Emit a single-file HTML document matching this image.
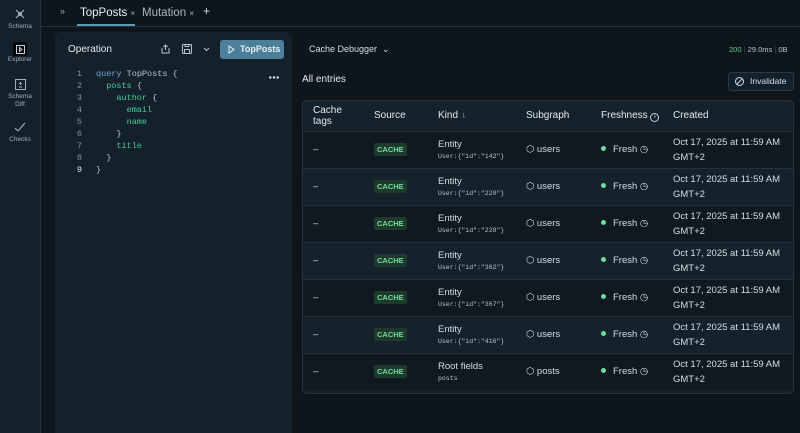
<!DOCTYPE html><html><head><style>
*{box-sizing:border-box;margin:0;padding:0}
body{width:800px;height:433px;overflow:hidden;background:#0e161c;font-family:"Liberation Sans",sans-serif;color:#d5dde3;position:relative}
.abs{position:absolute}
.side{left:0;top:0;width:41px;height:433px;background:#15212a;border-right:1px solid #24323c}
.si{position:absolute;left:0;width:40px;text-align:center;font-size:6.5px;color:#9fb0bc;line-height:8px}
.tabs{left:41px;top:0;right:0;height:27px;border-bottom:1px solid #24323c}
.panel{left:55px;top:32px;width:237px;height:401px;background:#15212a;border-radius:6px 6px 0 0}
.mono{font-family:"Liberation Mono",monospace}
.code{font-size:8.5px;line-height:12px}
.ln{position:absolute;left:15px;width:12px;text-align:right;color:#8494a0}
table{border-collapse:collapse;width:100%;font-size:9.5px}
.tbl{left:302px;top:100px;width:492px;height:294px;border:1px solid #24323c;border-radius:5px;overflow:hidden;background:#15222b}
td,th{padding:0 0 0 10px;text-align:left;vertical-align:middle}
th{height:30px;font-weight:normal;color:#e3e9ee;font-size:10px}
tr.r td{height:37px;border-top:1px solid #24323c}
tr.o{background:#10191f}
tr.e{background:#15222b}
.badge{background:#1d3a2c;color:#6fdc9a;font-size:7.5px;font-weight:bold;padding:2px 3px;border-radius:2px}
.sub{font-family:"Liberation Mono",monospace;font-size:6.5px;color:#b9c4cc;display:block;margin-top:3px}
.dot{display:inline-block;width:5px;height:5px;border-radius:50%;background:#6fdc9a;margin-right:7px;vertical-align:1px}
</style></head><body>
<div class="abs side">
<div class="si" style="top:8px"><svg width="12" height="12" viewBox="0 0 12 12" fill="none" stroke="#9fb0bc" stroke-width="1.2"><path d="M2 2l8 8M10 2l-8 8"/><circle cx="6" cy="6" r="1.5"/></svg><br>Schema</div>
<div class="si" style="top:42px"><div style="margin:0 auto;width:14px;height:14px;background:#05090c;border-radius:2px;display:flex;align-items:center;justify-content:center"><svg width="9" height="9" viewBox="0 0 9 9" fill="none" stroke="#c5d0d8"><rect x=".5" y=".5" width="8" height="8"/><path d="M3.5 2.5l2.5 2-2.5 2z"/></svg></div>Explorer</div>
<div class="si" style="top:79px"><svg width="11" height="11" viewBox="0 0 11 11" fill="none" stroke="#9fb0bc"><rect x=".5" y=".5" width="10" height="10"/><path d="M5.5 3v3M4 4.5h3M4 8h3"/></svg><br>Schema<br>Diff</div>
<div class="si" style="top:122px"><svg width="12" height="11" viewBox="0 0 12 11" fill="none" stroke="#9fb0bc" stroke-width="1.1"><path d="M1 6l3 3 7-8"/></svg><br>Checks</div>
</div>
<div class="abs tabs">
<span class="abs" style="left:19px;top:6px;font-size:9px;color:#9fb0bc">»</span>
<span class="abs" style="left:39px;top:7px;font-size:11.5px;color:#e8eef2">TopPosts <span style="font-size:8px;color:#9fb0bc">×</span></span>
<div class="abs" style="left:36px;top:24px;width:58px;height:2px;background:#5b9ab8"></div>
<span class="abs" style="left:101px;top:7px;font-size:11.5px;color:#a9b6c0">Mutation <span style="font-size:8px">×</span></span>
<span class="abs" style="left:162px;top:4px;font-size:12px;color:#d5dde3">+</span>
</div>
<div class="abs panel">
<span class="abs" style="left:13px;top:12px;font-size:10px;color:#e3e9ee">Operation</span>
<svg class="abs" style="left:106px;top:12px" width="9" height="10" viewBox="0 0 9 10" fill="none" stroke="#b8c4cc"><path d="M1 4v5h7V4M4.5 6V1M2.5 3l2-2 2 2"/></svg>
<svg class="abs" style="left:127px;top:12px" width="10" height="10" viewBox="0 0 10 10" fill="none" stroke="#b8c4cc"><rect x=".5" y=".5" width="9" height="9" rx="1"/><rect x="2.5" y="5.5" width="5" height="4"/><path d="M3 .5v2h4v-2"/></svg>
<svg class="abs" style="left:148px;top:15px" width="7" height="5" viewBox="0 0 7 5" fill="none" stroke="#b8c4cc"><path d="M1 1l2.5 2.5L6 1"/></svg>
<div class="abs" style="left:165px;top:8px;width:64px;height:19px;background:#4c7f99;border-radius:3px;font-size:9px;font-weight:bold;color:#e8f1f6;line-height:19px;padding-left:20px;white-space:nowrap">TopPosts</div>
<svg class="abs" style="left:173px;top:13px" width="7" height="9" viewBox="0 0 7 9" fill="none" stroke="#e8f1f6"><path d="M1 1l5 3.5L1 8z"/></svg>
<svg class="abs" style="left:214px;top:44px" width="10" height="3" viewBox="0 0 10 3" fill="#e3e9ee"><circle cx="1.3" cy="1.5" r="1.2"/><circle cx="5" cy="1.5" r="1.2"/><circle cx="8.7" cy="1.5" r="1.2"/></svg>
<div class="code mono abs" style="left:0;top:36px;width:237px">
<div class="ln" style="top:0">1</div><div class="ln" style="top:12px">2</div><div class="ln" style="top:24px">3</div><div class="ln" style="top:36px">4</div><div class="ln" style="top:48px">5</div><div class="ln" style="top:60px">6</div><div class="ln" style="top:72px">7</div><div class="ln" style="top:84px">8</div><div class="ln" style="top:96px;color:#e3e9ee">9</div>
<div class="abs" style="left:41px;top:0;white-space:pre;color:#b8c4cc"><span style="color:#6aa5e0">query</span> TopPosts {
  <span style="color:#3ccf9a">posts</span> {
    <span style="color:#3ccf9a">author</span> {
      <span style="color:#3ccf9a">email</span>
      <span style="color:#3ccf9a">name</span>
    }
    <span style="color:#3ccf9a">title</span>
  }
}</div>
</div>
</div>
<span class="abs" style="left:309px;top:44px;font-size:9px;color:#d5dde3">Cache Debugger &nbsp;⌄</span>
<span class="abs" style="left:729px;top:45px;font-size:7.5px;color:#b8c4cc"><span style="color:#5fc98a">200</span> <span style="color:#3a4650">|</span> 29.0ms <span style="color:#3a4650">|</span> 0B</span>
<span class="abs" style="left:302px;top:74px;font-size:10px;color:#e3e9ee">All entries</span>
<div class="abs" style="left:728px;top:72px;width:66px;height:19px;border:1px solid #2a3944;border-radius:3px;background:#13202a;font-size:8.5px;color:#d5dde3;line-height:17px;padding-left:21px">Invalidate</div>
<svg class="abs" style="left:735px;top:77px" width="9" height="9" viewBox="0 0 9 9" fill="none" stroke="#d5dde3"><circle cx="4.5" cy="4.5" r="4"/><path d="M1.8 7.2l5.4-5.4"/></svg>
<div class="abs tbl"><table>
<colgroup><col style="width:61px"><col style="width:64px"><col style="width:88px"><col style="width:75px"><col style="width:72px"><col></colgroup>
<tr><th>Cache<br>tags</th><th>Source</th><th>Kind <span style="font-size:7px;color:#8494a0">⇂</span></th><th>Subgraph</th><th>Freshness <span style="display:inline-block;width:9px;height:9px;border:1px solid #c5d0d8;border-radius:50%;font-size:6px;text-align:center;line-height:7px;vertical-align:0">i</span></th><th>Created</th></tr>
<tr class="r o"><td>–</td><td><span class="badge">CACHE</span></td><td>Entity<span class="sub">User:{"id":"142"}</span></td><td>⬡ users</td><td><span class="dot"></span>Fresh ◷</td><td style="line-height:15px">Oct 17, 2025 at 11:59 AM<br>GMT+2</td></tr>
<tr class="r e"><td>–</td><td><span class="badge">CACHE</span></td><td>Entity<span class="sub">User:{"id":"220"}</span></td><td>⬡ users</td><td><span class="dot"></span>Fresh ◷</td><td style="line-height:15px">Oct 17, 2025 at 11:59 AM<br>GMT+2</td></tr>
<tr class="r o"><td>–</td><td><span class="badge">CACHE</span></td><td>Entity<span class="sub">User:{"id":"228"}</span></td><td>⬡ users</td><td><span class="dot"></span>Fresh ◷</td><td style="line-height:15px">Oct 17, 2025 at 11:59 AM<br>GMT+2</td></tr>
<tr class="r e"><td>–</td><td><span class="badge">CACHE</span></td><td>Entity<span class="sub">User:{"id":"362"}</span></td><td>⬡ users</td><td><span class="dot"></span>Fresh ◷</td><td style="line-height:15px">Oct 17, 2025 at 11:59 AM<br>GMT+2</td></tr>
<tr class="r o"><td>–</td><td><span class="badge">CACHE</span></td><td>Entity<span class="sub">User:{"id":"367"}</span></td><td>⬡ users</td><td><span class="dot"></span>Fresh ◷</td><td style="line-height:15px">Oct 17, 2025 at 11:59 AM<br>GMT+2</td></tr>
<tr class="r e"><td>–</td><td><span class="badge">CACHE</span></td><td>Entity<span class="sub">User:{"id":"416"}</span></td><td>⬡ users</td><td><span class="dot"></span>Fresh ◷</td><td style="line-height:15px">Oct 17, 2025 at 11:59 AM<br>GMT+2</td></tr>
<tr class="r o"><td>–</td><td><span class="badge">CACHE</span></td><td>Root fields<span class="sub">posts</span></td><td>⬡ posts</td><td><span class="dot"></span>Fresh ◷</td><td style="line-height:15px">Oct 17, 2025 at 11:59 AM<br>GMT+2</td></tr>
</table></div>
</body></html>
